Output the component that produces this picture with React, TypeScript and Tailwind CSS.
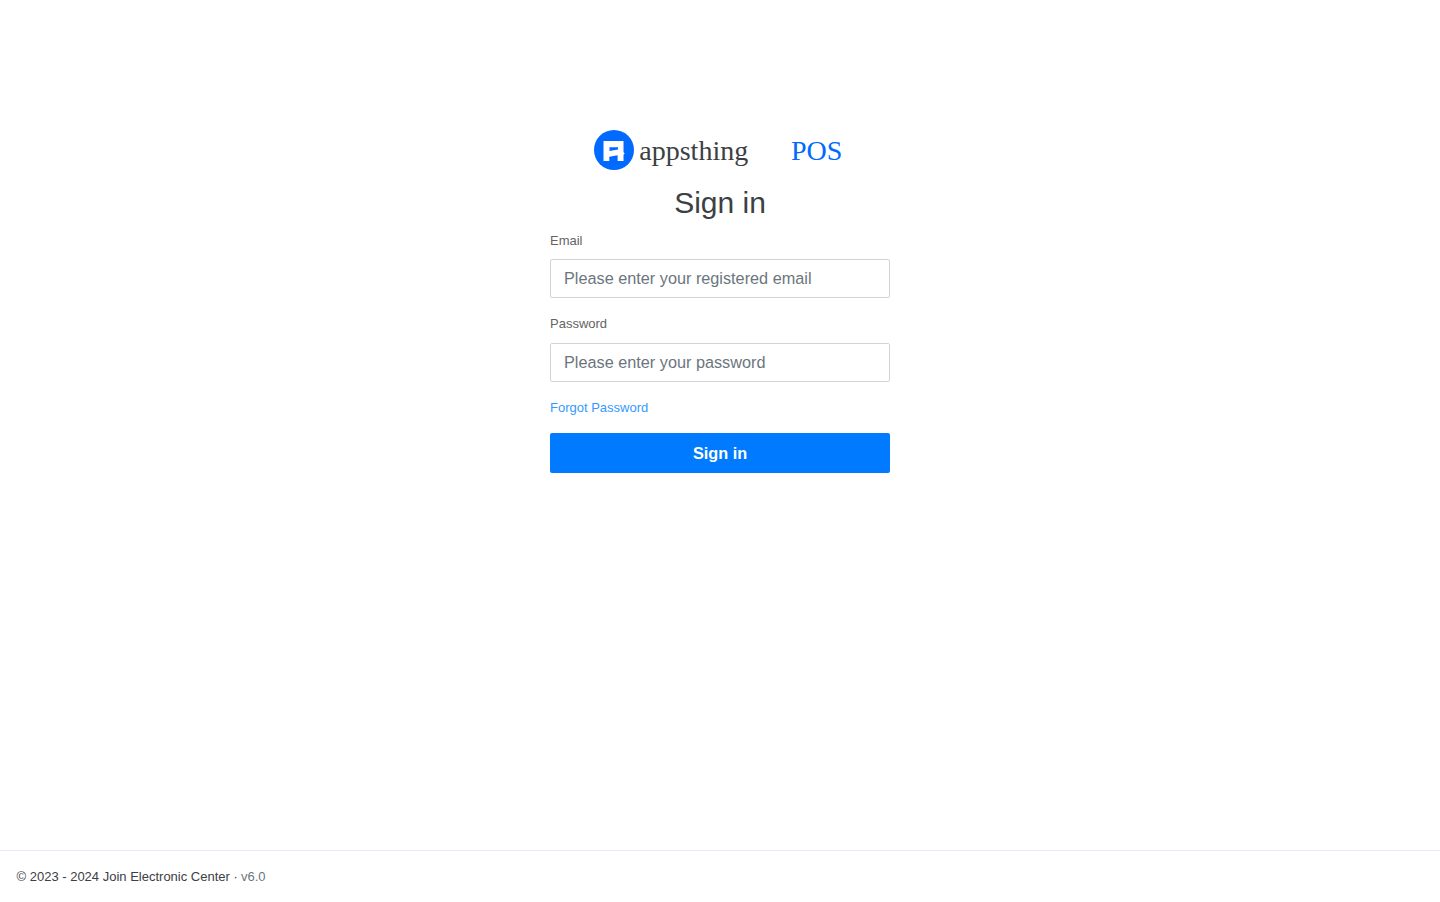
import React from "react";

function Logo() {
  return (
    <svg width="252" height="40" viewBox="0 0 252 40" className="block" role="img" aria-label="appsthing POS">
      <circle cx="20" cy="20" r="20" fill="#006aff" />
      <path
        fillRule="evenodd"
        fill="#fff"
        d="M9.5 11H29.5V22.3L30.7 23.6L29.5 24.8V31H23.6V25.2L15.3 26.8V31H9.5ZM15.5 17.2V20.9L24 19.4V17.2Z"
      />
      <text x="45.3" y="30" fontSize="28" fill="#3c4043" className="font-['Liberation_Serif',serif]">appsthing</text>
      <text x="197" y="30" fontSize="28" fill="#006aff" className="font-['Liberation_Serif',serif]">POS</text>
    </svg>
  );
}

function Field({ id, label, type, placeholder }: { id: string; label: string; type: string; placeholder: string }) {
  return (
    <div className="flex flex-col">
      <label htmlFor={id} className="text-[13px] leading-5 text-[#646464]">{label}</label>
      <input
        id={id}
        type={type}
        placeholder={placeholder}
        className="mt-[8.5px] h-[39px] w-full rounded-[2px] border border-[#ced4da] bg-white px-[13px] text-[16.25px] text-[#495057] placeholder:text-[#6c757d]"
      />
    </div>
  );
}

export default function App() {
  return (
    <div className="flex h-screen flex-col bg-white font-['Liberation_Sans',Arial,sans-serif] text-[#3c4043]">
      <main className="flex flex-1 flex-col items-center pt-[130px]">
        <Logo />
        <h1 className="mt-[13px] text-[30px] leading-10">Sign in</h1>
        <form className="mt-[7.5px] flex w-[340px] flex-col" onSubmit={(e) => e.preventDefault()}>
          <Field id="email" label="Email" type="email" placeholder="Please enter your registered email" />
          <div className="h-[16.25px]" />
          <Field id="password" label="Password" type="password" placeholder="Please enter your password" />
          <a href="#" className="mt-[16.25px] self-start text-[13px] leading-5 text-[#3699ff]">Forgot Password</a>
          <button type="submit" className="mt-[15px] h-10 w-full rounded-[2px] bg-[#007bff] text-[16.25px] font-bold text-white">Sign in</button>
        </form>
      </main>
      <footer className="h-[52px] border-t border-[#e8e8f7] px-[16.5px] pt-4 text-[13px] leading-5">
        © 2023 - 2024 Join Electronic Center · <span className="-ml-[0.5px] text-[#6c757d]">v6.0</span>
      </footer>
    </div>
  );
}
